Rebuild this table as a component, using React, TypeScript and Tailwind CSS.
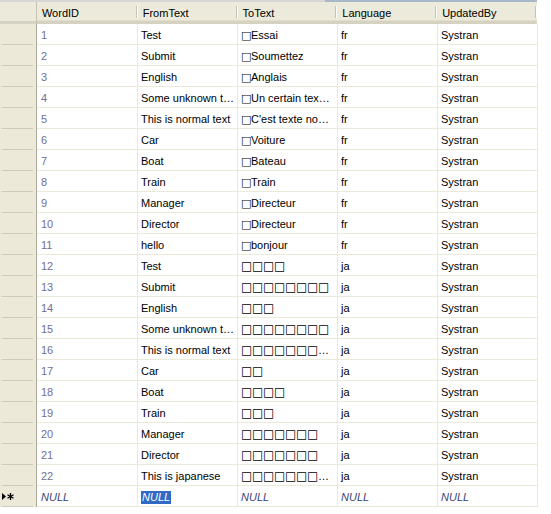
import React from 'react'

type Row = [string, string, string, string, string]

const rows: Row[] = [
  ['1', 'Test', '□Essai', 'fr', 'Systran'],
  ['2', 'Submit', '□Soumettez', 'fr', 'Systran'],
  ['3', 'English', '□Anglais', 'fr', 'Systran'],
  ['4', 'Some unknown t…', '□Un certain tex…', 'fr', 'Systran'],
  ['5', 'This is normal text', "□C'est texte no…", 'fr', 'Systran'],
  ['6', 'Car', '□Voiture', 'fr', 'Systran'],
  ['7', 'Boat', '□Bateau', 'fr', 'Systran'],
  ['8', 'Train', '□Train', 'fr', 'Systran'],
  ['9', 'Manager', '□Directeur', 'fr', 'Systran'],
  ['10', 'Director', '□Directeur', 'fr', 'Systran'],
  ['11', 'hello', '□bonjour', 'fr', 'Systran'],
  ['12', 'Test', '□□□□', 'ja', 'Systran'],
  ['13', 'Submit', '□□□□□□□□', 'ja', 'Systran'],
  ['14', 'English', '□□□', 'ja', 'Systran'],
  ['15', 'Some unknown t…', '□□□□□□□□', 'ja', 'Systran'],
  ['16', 'This is normal text', '□□□□□□□…', 'ja', 'Systran'],
  ['17', 'Car', '□□', 'ja', 'Systran'],
  ['18', 'Boat', '□□□□', 'ja', 'Systran'],
  ['19', 'Train', '□□□', 'ja', 'Systran'],
  ['20', 'Manager', '□□□□□□□', 'ja', 'Systran'],
  ['21', 'Director', '□□□□□□□', 'ja', 'Systran'],
  ['22', 'This is japanese', '□□□□□□□…', 'ja', 'Systran'],
]

const columns = ['WordID', 'FromText', 'ToText', 'Language', 'UpdatedBy']

// missing-glyph boxes get a fixed pitch so they line up like the original
function renderText(text: string) {
  const latin = /[A-Za-z]/.test(text)
  const parts: React.ReactNode[] = []
  let buf = ''
  text.split('').forEach((ch, i) => {
    if (ch === '□') {
      if (buf) parts.push(buf)
      buf = ''
      parts.push(
        <span
          key={i}
          className={`inline-block font-['DejaVu_Sans',sans-serif] leading-none text-black ${
            latin ? 'w-[10px] text-[11px]' : 'w-[11px] text-[12px]'
          }`}
        >
          □
        </span>
      )
    } else {
      buf += ch
    }
  })
  if (buf) parts.push(buf)
  return parts
}

function Cell({ first, children }: { first?: boolean; children: React.ReactNode }) {
  return (
    <div
      className={`${first ? 'w-[101px] pl-[4px]' : 'w-[100px] pl-[3px]'} shrink-0 h-full flex items-center pt-[2px] border-r border-b border-[#ebe9d8] whitespace-nowrap overflow-hidden`}
    >
      {children}
    </div>
  )
}

function NewRowMarker() {
  return (
    <svg width="14" height="9" viewBox="0 0 14 9">
      <polygon points="1,1 5,4.5 1,8" fill="#000" />
      <g stroke="#000" strokeWidth="1.3">
        <line x1="9.5" y1="1" x2="9.5" y2="8" />
        <line x1="6.5" y1="2.7" x2="12.5" y2="6.3" />
        <line x1="6.5" y1="6.3" x2="12.5" y2="2.7" />
      </g>
    </svg>
  )
}

export default function App() {
  return (
    <div className="w-[551px] h-[514px] bg-white font-['Liberation_Sans',Arial,sans-serif] text-[11px] text-black overflow-hidden">
      <div className="flex h-[2px] w-[537px]">
        <div className="w-[325px] bg-[#d6d6d6]" />
        <div className="flex-1 bg-[#a9b7ca]" />
      </div>

      {/* column headers */}
      <div className="flex h-[22px] w-[537px] bg-[#ebeadb]">
        <div className="w-[37px] h-full border-r border-[#c5c2b2] shadow-[inset_0_-3px_0_#d6d2c2]" />
        {columns.map((c, i) => (
          <div
            key={c}
            className={`${i === 0 ? 'w-[101px]' : 'w-[100px]'} h-full flex items-center justify-between pl-[5px] border-b-[3px] border-[#d6d2c2] shadow-[inset_0_-1px_0_#e2decd]`}
          >
            <span className="pt-[3px]">{c}</span>
            <div className="flex h-[12px] mt-[1px]">
              <div className="w-px bg-[#c7c5b2]" />
              <div className="w-px bg-white" />
            </div>
          </div>
        ))}
      </div>

      {/* data rows */}
      {rows.map((r) => (
        <div key={r[0]} className="flex h-[21px] w-[537px]">
          <div className="w-[37px] shrink-0 h-full bg-[#ece9d8] border-r border-[#aca899] flex flex-col justify-end">
            <div className="ml-[2px] w-[31px] h-px bg-[#cdcabb]" />
          </div>
          <Cell first>
            <span className="text-[#707090]">{r[0]}</span>
          </Cell>
          <Cell>{r[1]}</Cell>
          <Cell>{renderText(r[2])}</Cell>
          <Cell>{r[3]}</Cell>
          <Cell>{r[4]}</Cell>
        </div>
      ))}

      {/* new row */}
      <div className="flex h-[21px] w-[537px]">
        <div className="w-[37px] shrink-0 h-full bg-[#ece9d8] border-r border-[#aca899] flex flex-col">
          <div className="flex-1 flex items-center pl-[1px] pt-[1px]">
            <NewRowMarker />
          </div>
          <div className="ml-[2px] w-[31px] h-px bg-[#cdcabb]" />
        </div>
        <Cell first>
          <span className="italic text-[#3b3f7a]">NULL</span>
        </Cell>
        <Cell>
          <span className="italic bg-[#316ac5] text-white leading-[13px] px-px">NULL</span>
        </Cell>
        <Cell>
          <span className="italic text-[#3b3f7a]">NULL</span>
        </Cell>
        <Cell>
          <span className="italic text-[#3b3f7a]">NULL</span>
        </Cell>
        <Cell>
          <span className="italic text-[#3b3f7a]">NULL</span>
        </Cell>
      </div>
    </div>
  )
}
